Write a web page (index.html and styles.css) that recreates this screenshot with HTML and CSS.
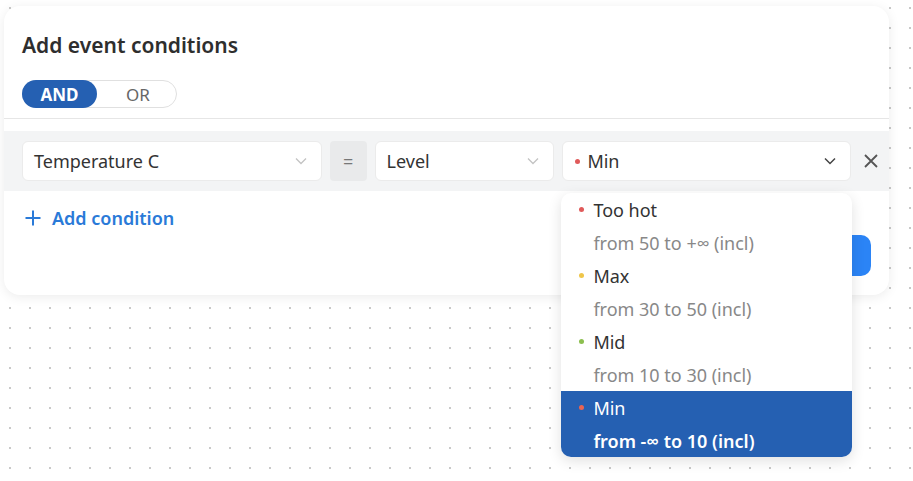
FILE: index.html
```html
<!DOCTYPE html>
<html lang="en">
<head>
  <meta charset="UTF-8" />
  <meta name="viewport" content="width=device-width, initial-scale=1.0" />
  <title>Add event conditions</title>
  <link rel="stylesheet" href="styles.css">
</head>
<body>
  <div class="card">
    <div class="card-head">
      <h1>Add event conditions</h1>
      <div class="toggle">
        <span class="toggle-opt active">AND</span>
        <span class="toggle-opt">OR</span>
      </div>
    </div>

    <div class="divider"></div>

    <div class="cond-row">
      <div class="select sel-param">
        <span class="select-text">Temperature C</span>
        <svg class="chevron" width="12" height="8" viewBox="0 0 12 8"><path d="M1 1.5l5 5 5-5" fill="none" stroke="currentColor" stroke-width="1.3"/></svg>
      </div>
      <div class="op">=</div>
      <div class="select sel-kind">
        <span class="select-text">Level</span>
        <svg class="chevron" width="12" height="8" viewBox="0 0 12 8"><path d="M1 1.5l5 5 5-5" fill="none" stroke="currentColor" stroke-width="1.3"/></svg>
      </div>
      <div class="select sel-value open">
        <span class="dot red"></span>
        <span class="select-text">Min</span>
        <svg class="chevron" width="12" height="8" viewBox="0 0 12 8"><path d="M1 1.5l5 5 5-5" fill="none" stroke="currentColor" stroke-width="1.5"/></svg>

        <ul class="dropdown">
          <li class="opt">
            <div class="opt-title"><span class="dot red"></span>Too hot</div>
            <div class="opt-sub">from 50 to +∞ (incl)</div>
          </li>
          <li class="opt">
            <div class="opt-title"><span class="dot yellow"></span>Max</div>
            <div class="opt-sub">from 30 to 50 (incl)</div>
          </li>
          <li class="opt">
            <div class="opt-title"><span class="dot green"></span>Mid</div>
            <div class="opt-sub">from 10 to 30 (incl)</div>
          </li>
          <li class="opt selected">
            <div class="opt-title"><span class="dot coral"></span>Min</div>
            <div class="opt-sub">from -∞ to 10 (incl)</div>
          </li>
        </ul>
      </div>
      <button class="remove" type="button">
        <svg width="16" height="16" viewBox="0 0 16 16"><path d="M2 2l12 12M14 2L2 14" stroke="currentColor" stroke-width="1.8" fill="none"/></svg>
      </button>
    </div>

    <div class="add-row">
      <svg width="16" height="16" viewBox="0 0 16 16"><path d="M8 0.5v15M0.5 8h15" stroke="currentColor" stroke-width="2" fill="none"/></svg>
      <span>Add condition</span>
    </div>

    <div class="card-foot">
      <button class="btn-primary" type="button">Save</button>
    </div>
  </div>
</body>
</html>
```

FILE: styles.css
```css
body {
  margin: 0;
  font-family: 'Noto Sans', 'Open Sans', sans-serif;
  color: #333;
  background-color: #fff;
  background-image: radial-gradient(circle, #c9c9c9 1px, transparent 1.2px);
  background-size: 20px 20px;
  background-position: 0 -2px;
  min-height: 100vh;
}
.card {
  margin: 6px 0 0 4px;
  width: 885px;
  height: 289px;
  background: #fff;
  border-radius: 16px;
  box-shadow: 0 2px 12px rgba(0,0,0,0.08);
  box-sizing: border-box;
}
.card-head {
  padding: 25px 18px 0 18px;
}
h1 {
  margin: 0;
  font-size: 21px;
  line-height: 28px;
  font-weight: 600;
  color: #2e2e2e;
}
.toggle {
  margin-top: 21px;
  display: flex;
  width: 155px;
  height: 28px;
  border: 1px solid #e0e0e0;
  border-radius: 14px;
  box-sizing: border-box;
}
.toggle-opt {
  flex: 1;
  display: flex;
  align-items: center;
  justify-content: center;
  font-size: 17px;
  color: #666;
  margin: -1px;
}
.toggle-opt.active {
  flex: 0 0 75px;
  background: #2560b2;
  color: #fff;
  font-weight: 700;
  border-radius: 14px;
}
.toggle-opt + .toggle-opt {
  padding-left: 4px;
}
.divider {
  margin-top: 10px;
  height: 1px;
  background: #e6e6e6;
}
.cond-row {
  margin-top: 12px;
  background: #f3f4f5;
  padding: 10px 6px 10px 18px;
  display: flex;
  gap: 8px;
  align-items: center;
}
.select {
  position: relative;
  height: 40px;
  background: #fff;
  border: 1px solid #ebebeb;
  border-radius: 6px;
  box-sizing: border-box;
  display: flex;
  align-items: center;
  padding: 0 14px 0 11px;
  font-size: 18px;
  color: #333;
}
.select-text {
  flex: 1;
}
.chevron {
  color: #c3c3c3;
}
.sel-param { width: 300px; }
.sel-kind { width: 180px; }
.sel-value { width: 289px; padding-left: 12px; }
.sel-value .chevron { color: #444; }
.op {
  width: 37px;
  height: 40px;
  background: #e9eaeb;
  border-radius: 4px;
  display: flex;
  align-items: center;
  justify-content: center;
  font-size: 18px;
  color: #777;
}
.remove {
  width: 24px;
  height: 24px;
  padding: 0;
  border: none;
  background: none;
  color: #555;
  display: flex;
  align-items: center;
  justify-content: center;
}
.dot {
  display: inline-block;
  width: 5px;
  height: 5px;
  border-radius: 50%;
  margin-right: 7px;
  flex: none;
}
.dot.red { background: #e05a5a; }
.dot.yellow { background: #efc64a; }
.dot.green { background: #8cbf4f; }
.dot.coral { background: #e86452; }

.dropdown {
  position: absolute;
  top: 51px;
  left: -2px;
  width: 291px;
  margin: 0;
  padding: 0;
  list-style: none;
  background: #fff;
  border-radius: 10px;
  box-shadow: 0 4px 14px rgba(0,0,0,0.12);
  overflow: hidden;
  z-index: 10;
}
.opt {
  padding: 0 0 0 18px;
}
.opt-title {
  height: 33px;
  display: flex;
  align-items: center;
  font-size: 18px;
  color: #333;
}
.opt-title .dot {
  margin-right: 9px;
}
.opt-sub {
  height: 33px;
  display: flex;
  align-items: center;
  padding-left: 14px;
  font-size: 18px;
  color: #888;
}
.opt.selected {
  background: #2560b2;
}
.opt.selected .opt-title {
  color: #fff;
}
.opt.selected .opt-sub {
  color: #fff;
  font-weight: 600;
}
.add-row {
  margin: 15px 0 0 21px;
  display: flex;
  align-items: center;
  gap: 11px;
  color: #2a7ad8;
  font-size: 18px;
  font-weight: 600;
  height: 24px;
}
.card-foot {
  display: flex;
  justify-content: flex-end;
  padding: 5px 18px 0 18px;
}
.btn-primary {
  width: 120px;
  height: 41px;
  border: none;
  border-radius: 10px;
  background: #2b84f6;
  color: #fff;
  font-family: inherit;
  font-size: 16px;
  font-weight: 600;
}
```
